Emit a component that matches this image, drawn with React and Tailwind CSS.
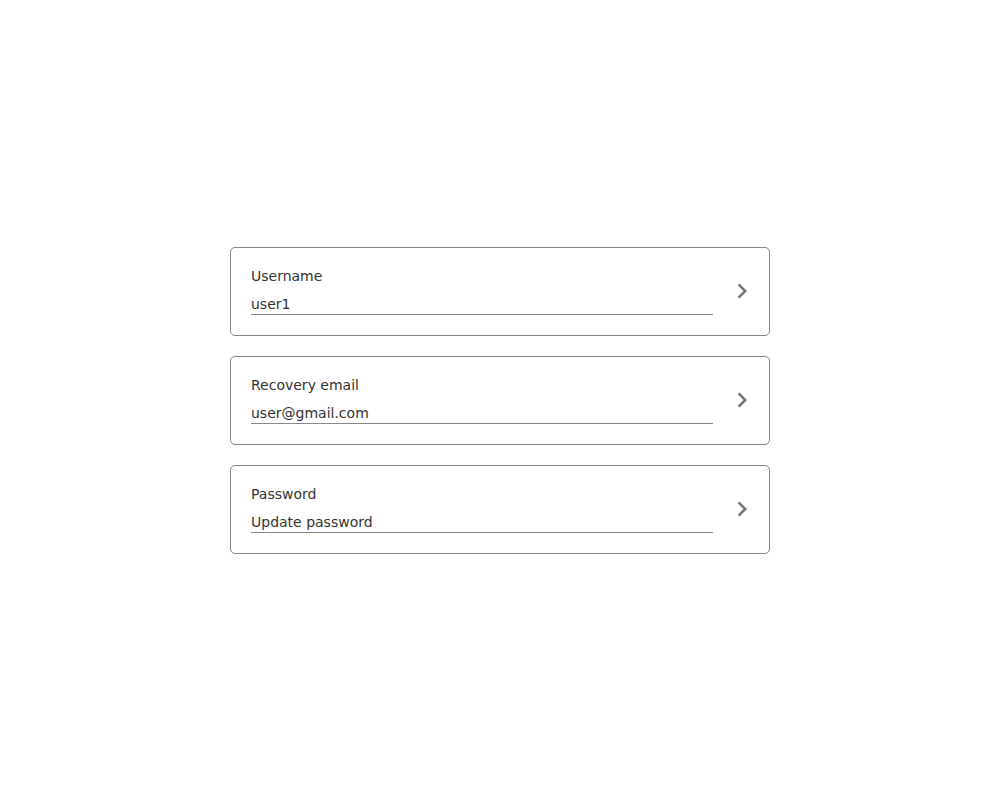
const ROWS = [
  { label: "Username", value: "user1" },
  { label: "Recovery email", value: "user@gmail.com" },
  { label: "Password", value: "Update password" },
];

function ChevronRight() {
  return (
    <svg width="30" height="30" viewBox="0 0 24 24" className="shrink-0 fill-[#757575]">
      <path d="M10 6L8.59 7.41 13.17 12l-4.58 4.59L10 18l6-6z" />
    </svg>
  );
}

export default function App() {
  return (
    <div
      className="flex min-h-screen items-center justify-center bg-white text-[#333]"
      style={{ fontFamily: '"DejaVu Sans", sans-serif' }}
    >
      <div className="flex w-[540px] flex-col gap-5">
        {ROWS.map((row) => (
          <div
            key={row.label}
            className="flex items-center rounded-[5px] border border-[#888] py-5 pl-5 pr-3"
          >
            <div className="flex-1">
              <div className="text-sm leading-4">{row.label}</div>
              <div className="mt-2.5 border-b border-[#888] text-sm leading-5">
                {row.value}
              </div>
            </div>
            <div className="ml-[14px] flex h-0 items-center">
              <ChevronRight />
            </div>
          </div>
        ))}
      </div>
    </div>
  );
}
